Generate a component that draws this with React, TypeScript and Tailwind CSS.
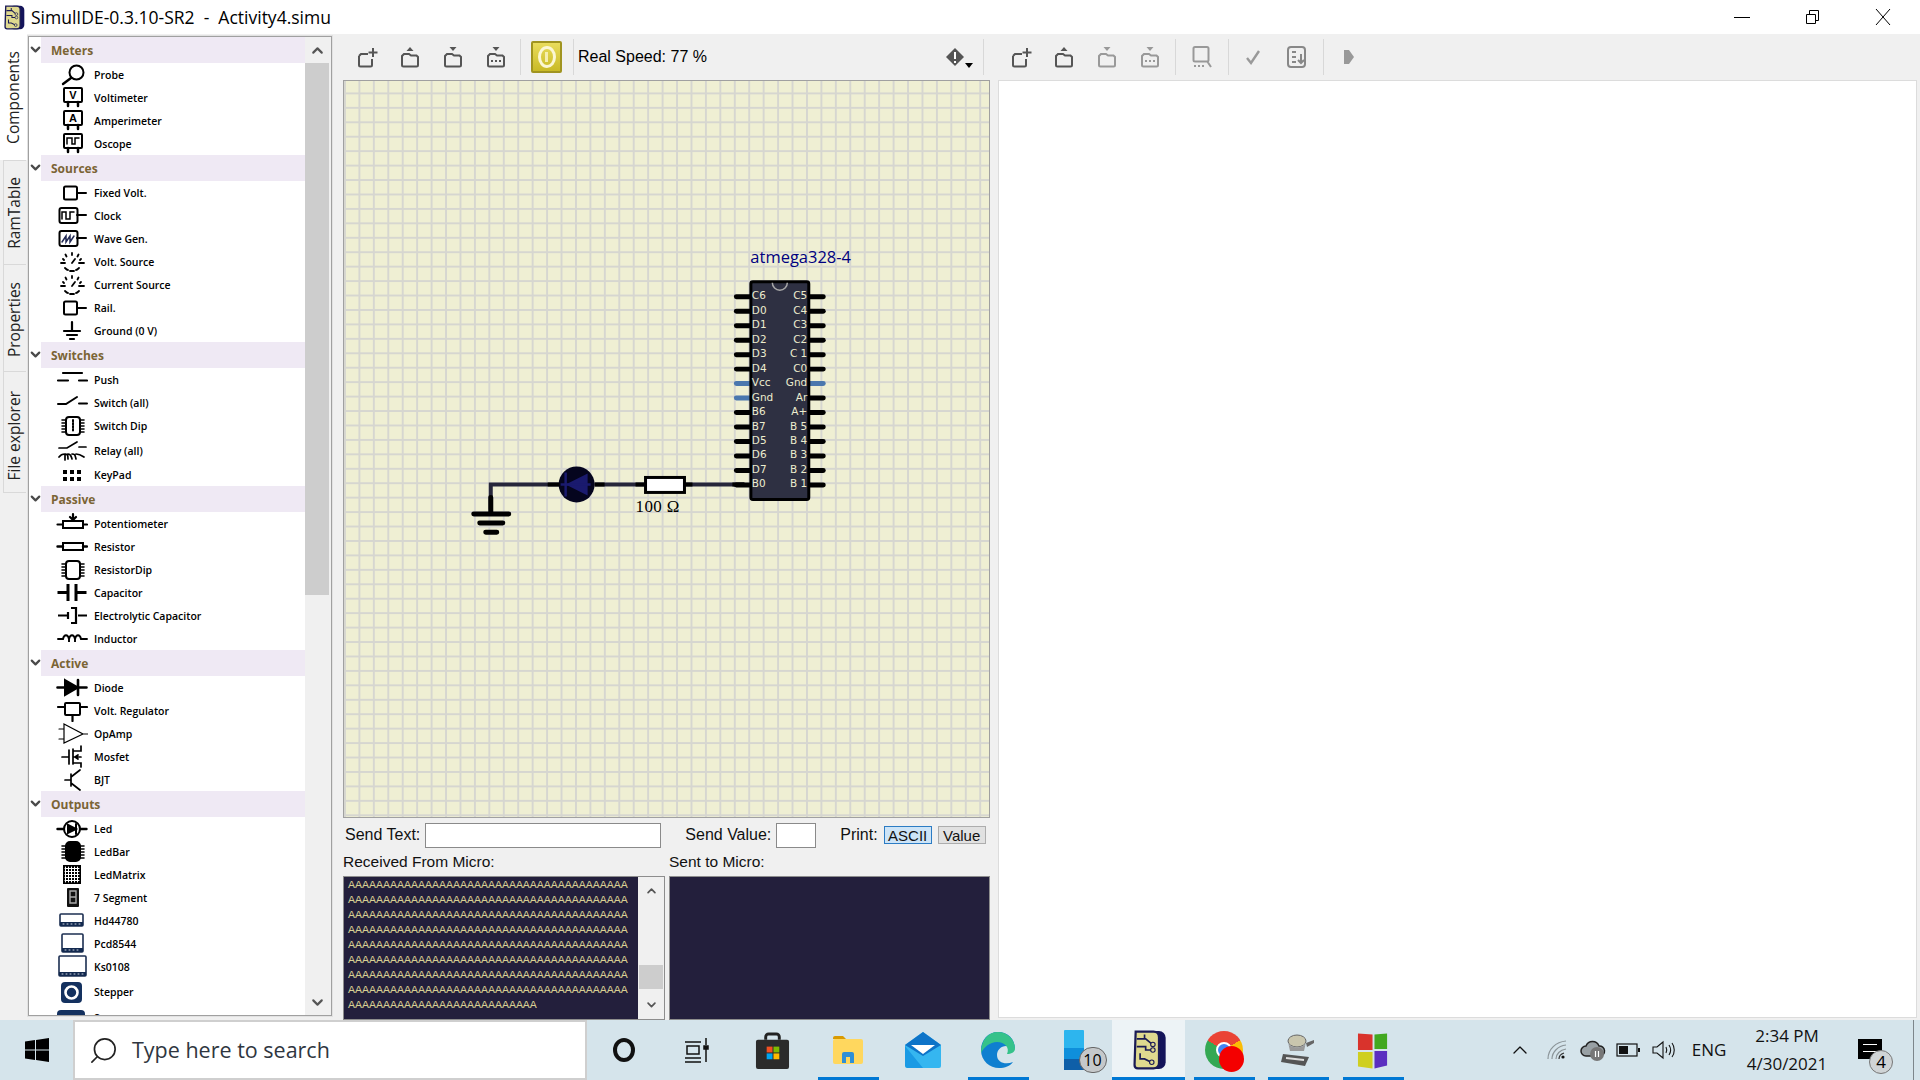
import type { ReactNode } from 'react'
import { ChevronDown, ChevronUp, Search } from 'lucide-react'

const S = ({ children }: { children: ReactNode }) => (
  <svg viewBox="0 0 32 23" className="h-[23px] w-[32px] shrink-0" fill="none" stroke="#000" strokeWidth="2" strokeLinecap="round">
    {children}
  </svg>
)

const chipPins = <path d="M6 6h4M6 9h4M6 12h4M6 15h4M6 18h4M24 6h4M24 9h4M24 12h4M24 15h4M24 18h4" strokeWidth="1.6" />

const Square = () => <path d="M9.5 5.5h10a1.5 1.5 0 0 1 1.5 1.5v10a1.5 1.5 0 0 1-1.5 1.5h-10A1.5 1.5 0 0 1 8 17V7a1.5 1.5 0 0 1 1.5-1.5zM21 12h9" />

const Meter = ({ children }: { children: ReactNode }) => (
  <>
    <rect x="8" y="2" width="18" height="14" rx="1" />
    <path d="M12 16v4M22 16v4" strokeWidth="2.5" />
    {children}
  </>
)

const SourceDots = () => (
  <path d="M16 3v2M9.500 4.500l1 2M22.500 4.500l-1 2M5 13h4M23 13h5M7 9l1 1M25 9l-1 1M9 18c1 1 2 2 3 2M20 20c1 0 2-1 3-2M14 21h4M19 9l-3 4" strokeWidth="1.800" />
)

const Screen = ({ x, y, w, h }: { x: number; y: number; w: number; h: number }) => (
  <>
    <rect x={x} y={y} width={w} height={h} rx="1" stroke="#1c2f52" strokeWidth="1.6" fill="#fff" />
    <rect x={x} y={y + h - 4} width={w} height="4" fill="#12294f" stroke="none" />
    <path d={`M${x + 3} ${y + h - 2}h${w - 6}`} stroke="#cfd6e2" strokeWidth="1" strokeDasharray="1 3" />
  </>
)

type Item = { label: string; icon: ReactNode; h?: string; nudge?: string }
type Group = { title: string; items: Item[] }

const groups: Group[] = [
  {
    title: 'Meters',
    items: [
      { label: 'Probe', icon: <><circle cx="20.5" cy="9.5" r="7" /><path d="M15 15l-8 6" strokeWidth="2.4" /></> },
      { label: 'Voltimeter', icon: <Meter><text x="17" y="13" fontSize="11" fontWeight="700" textAnchor="middle" fill="#000" stroke="none" fontFamily="Liberation Sans, sans-serif">V</text></Meter> },
      { label: 'Amperimeter', icon: <Meter><text x="17" y="13" fontSize="11" fontWeight="700" textAnchor="middle" fill="#000" stroke="none" fontFamily="Liberation Sans, sans-serif">A</text></Meter> },
      { label: 'Oscope', icon: <Meter><path d="M11 12V6h5v6h3V6h4" strokeWidth="1.5" /></Meter> },
    ],
  },
  {
    title: 'Sources',
    items: [
      { label: 'Fixed Volt.', icon: <Square /> },
      { label: 'Clock', icon: <><rect x="3.5" y="4" width="18" height="15" rx="2" /><path d="M21 11h9" /><path d="M6 15V8h4v7h4V8h4" strokeWidth="1.5" /></> },
      { label: 'Wave Gen.', icon: <><rect x="3.5" y="4" width="18" height="15" rx="2" /><path d="M21 11h9" /><path d="M6 15l4-6v6l4-6v6l4-6" strokeWidth="1.5" stroke="#222a55" /></> },
      { label: 'Volt. Source', icon: <SourceDots /> },
      { label: 'Current Source', icon: <SourceDots /> },
      { label: 'Rail.', icon: <Square /> },
      { label: 'Ground (0 V)', icon: <path d="M16 3v8M8 12h16M11 16h10M14 20h4" strokeWidth="2.2" /> },
    ],
  },
  {
    title: 'Switches',
    items: [
      { label: 'Push', icon: <path d="M7 5h19M2 12.5h10M23 12.5h8" strokeWidth="2.2" /> },
      { label: 'Switch (all)', icon: <path d="M2 13h8l11-7M23 12.5h8" strokeWidth="2" /> },
      { label: 'Switch Dip', icon: <>{chipPins}<rect x="10" y="3" width="14" height="18" rx="3" /><path d="M17 6v12" strokeDasharray="1.5 1.5" strokeWidth="2" /></> },
      { label: 'Relay (all)', h: 'h-[27px]', nudge: '-ml-px', icon: <path d="M3 9h8l10-6M23 8h7M3 18c2-3 4-3 6-3v6M9 15c2 0 3 0 3 5M12 15c3 0 3 2 4 5M16 15c3 0 3 1 4 5M20 15c3 0 5 1 8 3" strokeWidth="1.7" /> },
      { label: 'KeyPad', h: 'h-[22px]', icon: <path d="M7 8h4M14 8h4M21 8h4M7 15h4M14 15h4M21 15h4" strokeWidth="4" strokeLinecap="butt" /> },
    ],
  },
  {
    title: 'Passive',
    items: [
      { label: 'Potentiometer', icon: <><rect x="7" y="9" width="20" height="7" /><path d="M1.5 12.5H7M27 12.5h4M17 2v6M14 5l3 3 3-3" strokeWidth="2.2" /></> },
      { label: 'Resistor', icon: <><rect x="7" y="8" width="20" height="7" /><path d="M1.5 11.5H7M27 11.5h4" strokeWidth="2.4" /></> },
      { label: 'ResistorDip', icon: <>{chipPins}<rect x="10" y="3" width="14" height="18" rx="3" /></> },
      { label: 'Capacitor', icon: <path d="M1.5 11.5h10M20.5 11.5h10M12 3v17M20 3v17" strokeWidth="3" strokeLinecap="butt" /> },
      { label: 'Electrolytic Capacitor', icon: <path d="M2 11.5h10M22 11.5h9M12 8v7M15 4h5v15h-5M20 4v15" strokeWidth="2.2" strokeLinecap="butt" /> },
      { label: 'Inductor', icon: <path d="M2 12h5c1-5 5-5 6 0v3-3c1-5 5-5 6 0v3-3c1-5 5-5 6 0h6" strokeWidth="1.9" /> },
    ],
  },
  {
    title: 'Active',
    items: [
      { label: 'Diode', icon: <><path d="M1.5 11.5h29M22 4v15" strokeWidth="2.6" /><path d="M9 4l13 7.5L9 19z" fill="#000" /></> },
      { label: 'Volt. Regulator', icon: <><rect x="9" y="4" width="15" height="12" rx="1" /><path d="M2 8h7M24 8h7M16.5 16v6" strokeWidth="2.2" /></> },
      { label: 'OpAmp', icon: <path d="M8 2l19 10L8 21zM3 7h5M3 17h5M27 12h5" strokeWidth="1.2" /> },
      { label: 'Mosfet', icon: <path d="M6 12h7M13 5v14M17 4v15M17 6h8V1M17 12h8M17 18h8v4M22 10l-3 2 3 2" strokeWidth="1.7" /> },
      { label: 'BJT', icon: <path d="M9 12h6M15 6v12M15 9l9-7M15 15l9 7" strokeWidth="1.7" /> },
    ],
  },
  {
    title: 'Outputs',
    items: [
      { label: 'Led', icon: <><circle cx="16" cy="12" r="8" /><path d="M1.5 12H8M24 12h6.5" strokeWidth="2.4" /><path d="M12 8l8 4-8 4z" fill="#000" /><path d="M20 7v10" /></> },
      { label: 'LedBar', icon: <>{chipPins}<rect x="10" y="2" width="14" height="19" rx="4" fill="#000" /></> },
      { label: 'LedMatrix', icon: <><rect x="7" y="2" width="18" height="19" fill="#000" stroke="none" /><path d="M9.5 4v15M12.5 4v15M15.5 4v15M18.5 4v15M21.5 4v15M9 5.5h14M9 8.5h14M9 11.5h14M9 14.5h14M9 17.5h14" stroke="#fff" strokeWidth="1" /></> },
      { label: '7 Segment', icon: <><rect x="11" y="2" width="12" height="19" rx="1" fill="#111" stroke="none" /><path d="M14 5h6v6h-6zM14 11h6v6h-6z" stroke="#aaa" strokeWidth="1.4" /></> },
      { label: 'Hd44780', icon: <Screen x={4} y={5} w={23} h={12} /> },
      { label: 'Pcd8544', icon: <Screen x={6} y={2} w={21} h={18} /> },
      { label: 'Ks0108', icon: <Screen x={3} y={1} w={27} h={20} /> },
      { label: 'Stepper', h: 'h-[28px]', nudge: '-ml-0.5', icon: <><rect x="5" y="1" width="21" height="21" rx="4" fill="#14315f" stroke="none" /><circle cx="15.5" cy="11.5" r="6" fill="#14315f" stroke="#fff" strokeWidth="2.6" /></> },
      { label: 'Servo', icon: <rect x="1" y="4" width="28" height="16" rx="4" fill="#14315f" stroke="none" /> },
    ],
  },
]

const ToolIcon = ({ kind, tone = '#555' }: { kind: 'new' | 'open' | 'save' | 'saveas'; tone?: string }) => (
  <svg viewBox="0 0 22 22" className="h-[22px] w-[22px]" fill="none" stroke={tone} strokeWidth="2">
    <path d={kind === 'new' ? 'M3 10v9a1.5 1.5 0 0 0 1.5 1.5h10A1.5 1.5 0 0 0 16 19v-6M3 10l2-2h7' : 'M3 10v9a1.5 1.5 0 0 0 1.5 1.5h13A1.5 1.5 0 0 0 19 19v-8l-1.5-1.5H12L10 8H5z'} />
    {kind === 'new' && <path d="M17 2v9M12.5 6.5h9" />}
    {kind === 'open' && <path d="M7.5 5L11 1l3.5 4z" fill={tone} stroke="none" />}
    {(kind === 'save' || kind === 'saveas') && <path d="M7.5 1L11 5l3.5-4z" fill={tone} stroke="none" />}
    {kind === 'saveas' && <path d="M6 15h2M10 15h2M14 15h2" strokeWidth="2" />}
  </svg>
)

const Sep = ({ cls }: { cls: string }) => <div className={`h-9 w-px bg-[#d8d8d8] ${cls}`} />

function Toolbar() {
  return (
    <div className="flex h-[46px] shrink-0 items-center pl-[2px]">
      {(['new', 'open', 'save', 'saveas'] as const).map((k) => (
        <div key={k} className="flex w-[43px] justify-center">
          <ToolIcon kind={k} />
        </div>
      ))}
      <Sep cls="ml-[3px]" />
      <div className="ml-[10px] flex h-8 w-[31px] items-center justify-center rounded-[2px] border-2 border-[#a09420] bg-[linear-gradient(#e9dc5c,#c9ba26)]">
        <div className="flex h-[22px] w-[18px] items-center justify-center rounded-[50%] border-[3px] border-[#fbf7d4]">
          <div className="h-[10px] w-[3px] bg-[#f5eeb0]" />
        </div>
      </div>
      <Sep cls="ml-[11px]" />
      <span className="ml-1 text-[16px] text-black [font-family:'Liberation_Sans',sans-serif]">Real Speed: 77 %</span>
      <div className="relative ml-auto mr-[18px] flex items-center">
        <svg viewBox="0 0 20 20" className="h-5 w-5">
          <path d="M10 1l9 9-9 9-9-9z" fill="#555" />
          <path d="M10 5v7M10 14v2" stroke="#fff" strokeWidth="2" />
        </svg>
        <div className="absolute -right-[8px] top-[16px] h-0 w-0 border-x-4 border-t-[5px] border-x-transparent border-t-black" />
      </div>
      <Sep cls="mr-[6px]" />
    </div>
  )
}

function RightToolbar() {
  return (
    <div className="flex h-[46px] shrink-0 items-center pl-px">
      <div className="flex w-[43px] justify-center"><ToolIcon kind="new" /></div>
      <div className="flex w-[43px] justify-center"><ToolIcon kind="open" /></div>
      <div className="flex w-[43px] justify-center"><ToolIcon kind="save" tone="#999" /></div>
      <div className="flex w-[43px] justify-center"><ToolIcon kind="saveas" tone="#999" /></div>
      <Sep cls="ml-[4px]" />
      <div className="flex w-[52px] justify-center">
        <svg viewBox="0 0 22 24" className="h-[24px] w-[22px]" fill="none" stroke="#999" strokeWidth="2">
          <path d="M4 2h12a1.5 1.5 0 0 1 1.5 1.5V15a1.5 1.5 0 0 1-1.5 1.5H4A1.5 1.5 0 0 1 2.500 15V3.500A1.500 1.500 0 0 1 4 2zM16 16l4 6M3 21h2M7 21h2M11 21h2" />
        </svg>
      </div>
      <Sep cls="" />
      <div className="flex w-[48px] justify-center">
        <svg viewBox="0 0 16 16" className="h-4 w-4" fill="none" stroke="#999" strokeWidth="2.400"><path d="M2 9l4 5 8-12" /></svg>
      </div>
      <div className="flex w-[40px] justify-center">
        <svg viewBox="0 0 22 24" className="h-6 w-[22px]" fill="none" stroke="#888" strokeWidth="2"><rect x="2" y="2" width="17" height="20" rx="3" /><path d="M6 7h4M6 12h4M6 17h4M15 9v9M12 15l3 3 3-3" /></svg>
      </div>
      <Sep cls="ml-[6px]" />
      <div className="flex w-[50px] justify-center">
        <svg viewBox="0 0 12 16" className="h-4 w-3"><path d="M1 1h5l5 7-5 7H1z" fill="#999" /></svg>
      </div>
    </div>
  )
}

const pinY = [297, 311.5, 326, 340.5, 355, 369.5, 384, 398.5, 413, 427.5, 442, 456.5, 471, 485.5]
const leftPins = ['C6', 'D0', 'D1', 'D2', 'D3', 'D4', 'Vcc', 'Gnd', 'B6', 'B7', 'D5', 'D6', 'D7', 'B0']
const rightPins = ['C5', 'C4', 'C3', 'C2', 'C 1', 'C0', 'Gnd', 'Ar', 'A+', 'B 5', 'B 4', 'B 3', 'B 2', 'B 1']

function Circuit() {
  return (
    <svg viewBox="344 81 646 737" className="absolute inset-0 h-full w-full" fill="none">
      <path d="M491 510V485H560M595 485H645M685 485H745" stroke="#26263a" strokeWidth="4" />
      <path d="M491 498v14M474 514.500h35M480 523.500h23M486 533h11" stroke="#000" strokeWidth="5" strokeLinecap="round" />
      <circle cx="577" cy="485" r="18" fill="#05051e" />
      <path d="M588 474v22L566 485z" fill="#1a1a6e" />
      <path d="M561 485h30M566 473v24" stroke="#1a1a6e" strokeWidth="2.500" />
      <path d="M548 485h12M595 485h10M636 485h9M685 485h8M733 485h12" stroke="#000" strokeWidth="4" />
      <rect x="646" y="478" width="39" height="15" fill="#fff" stroke="#000" strokeWidth="3" />
      <text x="636" y="513" fontSize="17" fill="#000" fontFamily="'Liberation Serif', serif" letterSpacing="0.4" xmlSpace="preserve">100 Ω</text>
      {pinY.map((y, i) => (
        <g key={y} strokeWidth="5" strokeLinecap="round">
          <path d={`M737 ${y}h14`} stroke={i === 6 || i === 7 ? '#4a77ae' : '#000'} />
          <path d={`M810 ${y}h14`} stroke={i === 6 ? '#4a77ae' : '#000'} />
        </g>
      ))}
      <rect x="751.500" y="282" width="58" height="218" rx="2" fill="#2e3042" stroke="#000" strokeWidth="3" />
      <path d="M773 283a7.500 7.500 0 0 0 15 0" stroke="#a8a8a8" strokeWidth="1.500" />
      {leftPins.map((t, i) => (
        <text key={`l${i}`} x="752.500" y={pinY[i] + 2.5} fontSize="10.500" fill="#ededcf" fontFamily="'DejaVu Sans', sans-serif">{t}</text>
      ))}
      {rightPins.map((t, i) => (
        <text key={`r${i}`} x="808" y={pinY[i] + 2.5} fontSize="10.500" textAnchor="end" fill="#ededcf" fontFamily="'DejaVu Sans', sans-serif">{t}</text>
      ))}
      <text x="751" y="263" fontSize="16.500" fill="#000080" fontFamily="'Open Sans', sans-serif">atmega328-4</text>
    </svg>
  )
}

const Tab = ({ label, cls }: { label: string; cls: string }) => (
  <div className={`flex items-center justify-center ${cls}`}>
    <span className="rotate-180 text-[15.500px] text-[#222] [font-family:'Open_Sans',sans-serif] [writing-mode:vertical-rl]">{label}</span>
  </div>
)

function Tree() {
  return (
    <div className="mb-[4px] mt-[2px] flex w-[304px] shrink-0 border border-[#a0a0a0] outline outline-1 outline-[#e2e2e2]">
      <div className="min-w-0 flex-1 overflow-hidden bg-white [font-family:'Open_Sans',sans-serif]">
        {groups.map((g) => (
          <div key={g.title}>
            <div className="flex h-[26px] items-center">
              <div className="flex w-[12px] justify-center">
                <ChevronDown size={15} strokeWidth={3.5} className="-mt-0.5 shrink-0 text-[#4a4a4a]" />
              </div>
              <div className="flex h-full flex-1 items-center bg-[#efe9f4] pl-[10px] pt-[2px] text-[12px] font-bold text-[#7b6435]">{g.title}</div>
            </div>
            {g.items.map((it) => (
              <div key={it.label} className={`flex items-center pl-[27px] ${it.h ?? 'h-[23px]'}`}>
                <S>{it.icon}</S>
                <span className={`ml-[6px] pt-[2px] text-[10.500px] font-semibold text-black ${it.nudge ?? ''}`}>{it.label}</span>
              </div>
            ))}
          </div>
        ))}
      </div>
      <div className="flex w-[26px] shrink-0 flex-col bg-[#f0f0f0] pr-[2px]">
        <div className="flex h-[26px] shrink-0 items-center justify-center"><ChevronUp size={17} strokeWidth={3} className="text-[#555]" /></div>
        <div className="h-[532px] shrink-0 bg-[#cdcdcd]" />
        <div className="mt-auto flex h-[26px] shrink-0 items-center justify-center"><ChevronDown size={17} strokeWidth={3} className="text-[#555]" /></div>
      </div>
    </div>
  )
}

const rxLines = Array.from({ length: 9 }, (_, i) => (i === 8 ? 'A'.repeat(27) : 'A'.repeat(40)))

function SerialPanel() {
  return (
    <div className="flex h-[202px] shrink-0 flex-col text-[16px] text-[#111] [font-family:'Liberation_Sans',sans-serif]">
      <div className="flex h-[29px] shrink-0 items-center pt-[5px]">
        <span className="ml-[2px]">Send Text:</span>
        <div className="ml-[5px] h-[25px] w-[236px] border border-[#8a8a8a] bg-white" />
        <span className="ml-[24px]">Send Value:</span>
        <div className="ml-[5px] h-[25px] w-[40px] border border-[#8a8a8a] bg-white" />
        <span className="ml-[24px]">Print:</span>
        <div className="ml-[6px] flex h-[18px] w-[48px] shrink-0 items-center justify-center border border-[#2c7cc4] bg-[#cde4f7] text-[15px] leading-none">ASCII</div>
        <div className="ml-[6px] flex h-[18px] w-[48px] shrink-0 items-center justify-center border border-[#adadad] bg-[#e1e1e1] text-[15px] leading-none">Value</div>
      </div>
      <div className="flex h-[29px] shrink-0 items-end pb-[3px] text-[15.500px]">
        <span className="w-[326px]">Received From Micro:</span>
        <span>Sent to Micro:</span>
      </div>
      <div className="flex min-h-0 flex-1">
        <div className="flex w-[322px] border border-[#8d8d8d]">
          <div className="flex-1 overflow-hidden bg-[#231f3c] pl-[4px] pt-[1px] text-[11.670px] leading-[15px] text-[#d8cf94] [font-family:'Liberation_Mono',monospace]">
            {rxLines.map((l, i) => (
              <div key={i}>{l}</div>
            ))}
          </div>
          <div className="flex w-[26px] shrink-0 flex-col items-center bg-[#f0f0f0] py-[7px]">
            <ChevronUp size={15} strokeWidth={3} className="text-[#555]" />
            <div className="mt-[67px] h-[27px] w-[24px] bg-[#cdcdcd]" />
            <ChevronDown size={15} strokeWidth={3} className="mt-[9px] text-[#555]" />
          </div>
        </div>
        <div className="ml-[4px] flex-1 border border-[#8d8d8d] bg-[#231f3c]" />
      </div>
    </div>
  )
}

const Slot = ({ w, on, active, children }: { w: string; on?: boolean; active?: boolean; children: ReactNode }) => (
  <div className={`relative flex h-full shrink-0 items-center justify-center ${w} ${active ? 'bg-[#edf3f6]' : ''}`}>
    {children}
    {on && <div className={`absolute bottom-0 h-[3px] bg-[#0078d4] ${active ? 'inset-x-0' : 'w-[61px]'}`} />}
  </div>
)

const SimulLogo = ({ size }: { size: string }) => (
  <svg viewBox="0 0 32 36" className={size}>
    <rect x="10" y="1" width="21" height="34" rx="6" fill="#14145a" />
    <path d="M4 1.500h16c3 0 5 2 5 5v23c0 3-2 5-5 5H6c-2 0-3-1-3-3z" fill="#dfd98f" stroke="#1a1a55" strokeWidth="2" />
    <path d="M5 8h8l6 5M5 15h8v3h6M8 21v5h4l6 3M12 8V4" stroke="#1a1a55" strokeWidth="1.500" fill="none" />
    <circle cx="19.500" cy="13" r="2" fill="#dfd98f" stroke="#1a1a55" />
    <circle cx="19.500" cy="18" r="2" fill="#dfd98f" stroke="#1a1a55" />
    <circle cx="18.500" cy="29" r="2" fill="#dfd98f" stroke="#1a1a55" />
  </svg>
)

function Taskbar() {
  return (
    <div className="flex h-[60px] shrink-0 bg-[#d5e4eb] [font-family:'Open_Sans',sans-serif]">
      <div className="flex w-[73px] shrink-0 items-center justify-center">
        <svg viewBox="0 0 24 24" className="h-6 w-6" fill="#000"><path d="M0 3.500l10-1.400V11.500H0zM11 2l13-2v11.500H11zM0 12.500h10v9.600L0 20.600zM11 12.500h13V24l-13-2z" /></svg>
      </div>
      <div className="flex w-[514px] shrink-0 items-center border-2 border-[#cfcfcf] bg-white pl-[13px]">
        <Search size={31} strokeWidth={1.3} className="-scale-x-100 text-[#222]" />
        <span className="ml-[13px] text-[21.500px] text-[#2f3640]">Type here to search</span>
      </div>
      <Slot w="w-[74px]">
        <div className="h-[24px] w-[22px] rounded-[50%] border-[4px] border-[#111]" />
      </Slot>
      <Slot w="w-[72px]">
        <svg viewBox="0 0 26 26" className="h-[26px] w-[26px]" fill="none" stroke="#111" strokeWidth="1.500"><path d="M1 5h16M1 25h16M3 9h12v8H3zM1 21h16M22 1v7M22 12v13" /><path d="M20 9h4v3h-4z" fill="#111" /></svg>
      </Slot>
      <Slot w="w-[78px]">
        <svg viewBox="0 0 36 38" className="h-[37px] w-[35px]"><path d="M11 8V5a3 3 0 0 1 3-3h8a3 3 0 0 1 3 3v3" fill="none" stroke="#222" strokeWidth="3" /><rect x="1" y="8" width="34" height="30" rx="2" fill="#2b2b2b" /><rect x="12" y="15" width="6" height="6" fill="#f25022" /><rect x="19" y="15" width="6" height="6" fill="#7fba00" /><rect x="12" y="22" width="6" height="6" fill="#00a4ef" /><rect x="19" y="22" width="6" height="6" fill="#ffb900" /></svg>
      </Slot>
      <Slot w="w-[74px]" on>
        <svg viewBox="0 0 32 30" className="h-[30px] w-[32px]"><path d="M1 3a2 2 0 0 1 2-2h8l3 3H1z" fill="#d99a00" /><rect x="1" y="4" width="30" height="25" rx="2" fill="#ffd75e" /><path d="M10 28V19a2 2 0 0 1 2-2h8a2 2 0 0 1 2 2v9h-4v-6h-4v6z" fill="#2f8fd6" /></svg>
      </Slot>
      <Slot w="w-[76px]">
        <svg viewBox="0 0 36 36" className="h-9 w-9"><path d="M18 0l18 13v21a2 2 0 0 1-2 2H2a2 2 0 0 1-2-2V13z" fill="#35b6f0" /><path d="M0 13L18 0l18 13-18 11z" fill="#0e74c8" /><path d="M6 13h24l-12 9z" fill="#fff" /><path d="M0 34V14l18 22H2z" fill="#1a9ae4" /></svg>
      </Slot>
      <Slot w="w-[74px]" on>
        <svg viewBox="0 0 36 38" className="h-[38px] w-[36px]"><path d="M18 1C8 1 1 9 1 19c0 11 9 18 18 18 6 0 11-2 14-6-7 3-16 1-16-7 0-5 4-9 9-9 6 0 9 3 9 3C35 8 28 1 18 1z" fill="#0f7fd0" /><path d="M18 1c8 0 17 6 17 17 0 3-4 5-8 5 3-6-2-12-10-12-7 0-13 5-16 11C1 9 8 1 18 1z" fill="#35c28a" /></svg>
      </Slot>
      <Slot w="w-[77px]">
        <div className="relative flex items-center">
          <svg viewBox="0 0 20 40" className="h-[40px] w-[20px]"><rect width="20" height="40" rx="1" fill="#2db5ee" /><rect y="18" width="20" height="11" fill="#0f8fdb" /><rect y="29" width="20" height="11" fill="#0f5fa8" /></svg>
          <div className="absolute -bottom-[3px] left-[15px] flex h-[26px] w-[28px] items-center justify-center rounded-full border border-[#666] bg-[#c5c8ca] text-[16px] leading-none text-black">10</div>
        </div>
      </Slot>
      <Slot w="w-[73px]" on active>
        <SimulLogo size="h-[40px] w-[36px]" />
      </Slot>
      <Slot w="w-[78px]" on>
        <div className="relative h-[38px] w-[38px]">
          <div className="h-full w-full rounded-full bg-[conic-gradient(from_300deg,#ea4335_0_33%,#fbbc05_33%_50%,#34a853_50%_100%)]" />
          <div className="absolute left-[11px] top-[11px] h-4 w-4 rounded-full border-2 border-white bg-[#4285f4]" />
          <div className="absolute left-[14px] top-[15px] h-[26px] w-[25px] rounded-[50%] bg-[#f40000]" />
        </div>
      </Slot>
      <Slot w="w-[70px]" on>
        <svg viewBox="0 0 36 36" className="h-9 w-9"><ellipse cx="17" cy="9" rx="9" ry="6" fill="#c9c6ae" stroke="#666" /><path d="M8 10c0 7 18 7 18 0l-2 9H10z" fill="#999" /><path d="M26 11l8-3v3l-7 4z" fill="#666" /><path d="M3 22l26 3-4 9L1 30z" fill="#555" /><path d="M6 26l18 2" stroke="#ddd" strokeWidth="2" /></svg>
      </Slot>
      <Slot w="w-[80px]" on>
        <svg viewBox="0 0 34 38" className="h-[38px] w-[33px]"><path d="M1 2l15 1v16H1z" fill="#d9332c" /><path d="M18 3l13-1v16H18z" fill="#42a820" /><path d="M1 21h15v17L1 36z" fill="#cfcf1f" /><path d="M18 20h13v15l-13 3z" fill="#5b2fc0" /></svg>
      </Slot>
      <div className="flex-1" />
      <div className="flex h-full w-[36px] items-center justify-center">
        <ChevronUp size={24} strokeWidth={1.3} className="text-[#111]" />
      </div>
      <div className="flex h-full w-[37px] items-center justify-center">
        <svg viewBox="0 0 20 20" className="h-[20px] w-[20px]" fill="none" stroke="#8b9498" strokeWidth="1.200"><path d="M1 19C1 9 9 2 19 1M5 19c0-7 6-13 14-14M9 19c0-5 4-9 10-10" /><path d="M12 19c0-3 2-5 5-6" stroke="#333" /><circle cx="16" cy="17" r="1.600" fill="#111" stroke="none" /></svg>
      </div>
      <div className="flex h-full w-[35px] items-center justify-center">
        <svg viewBox="0 0 26 22" className="h-[22px] w-[26px]"><path d="M6 17a5 5 0 0 1 0-10 7 7 0 0 1 13 0 5 5 0 0 1 1 10z" fill="#98a0a4" stroke="#222" strokeWidth="1.500" /><circle cx="17" cy="15" r="7" fill="#777" /><path d="M15.500 12v6M18.500 12v6" stroke="#fff" strokeWidth="1.200" /></svg>
      </div>
      <div className="flex h-full w-[36px] items-center justify-center">
        <svg viewBox="0 0 24 14" className="h-[14px] w-[24px]" fill="none"><rect x="1" y="1" width="20" height="12" stroke="#111" strokeWidth="1.200" /><rect x="3" y="3" width="9" height="8" fill="#111" /><rect x="22" y="5" width="2" height="4" fill="#111" /></svg>
      </div>
      <div className="flex h-full w-[36px] items-center justify-center">
        <svg viewBox="0 0 24 20" className="h-[20px] w-[24px]" fill="none" stroke="#111" strokeWidth="1.100"><path d="M1 7h4l6-5v16l-6-5H1zM14 7c1 2 1 4 0 6M17 5c2 3 2 7 0 10M20 3c3 4 3 10 0 14" /></svg>
      </div>
      <div className="flex h-full w-[54px] items-center justify-center text-[17px] text-[#111]">ENG</div>
      <div className="flex h-full w-[102px] flex-col items-center justify-center text-[17px] leading-[28px] text-[#111]">
        <span>2:34 PM</span>
        <span>4/30/2021</span>
      </div>
      <div className="flex h-full w-[64px] items-center justify-center">
        <div className="relative -mt-[3px] h-[20px] w-[24px] bg-black">
          <div className="ml-[5px] mt-[5px] h-[8px] w-[14px] border-y border-white" />
          <div className="absolute -bottom-[15px] left-[11px] flex h-[24px] w-[24px] items-center justify-center rounded-full border border-[#777] bg-[#d0d4d6] text-[17px] leading-none text-black">4</div>
        </div>
      </div>
      <div className="ml-[11px] mr-[6px] h-full w-px bg-[#7d868b]" />
    </div>
  )
}

export default function App() {
  return (
    <div className="flex h-screen w-screen flex-col overflow-hidden bg-[#f0f0f0]">
      {/* title bar */}
      <div className="flex h-[34px] shrink-0 items-center bg-white">
        <div className="ml-[3px] w-[22px]">
          <SimulLogo size="h-[25px] w-[22px]" />
        </div>
        <span className="ml-[6px] whitespace-pre text-[17.500px] text-black [font-family:'Open_Sans',sans-serif]">SimulIDE-0.3.10-SR2  -  Activity4.simu</span>
        <div className="ml-auto mr-[2px] flex h-full items-center">
          <div className="flex w-[68px] justify-center"><div className="h-px w-4 bg-black" /></div>
          <div className="flex w-[71px] justify-center">
            <svg viewBox="0 0 16 16" className="h-4 w-4" fill="none" stroke="#000"><path d="M2.500 5.500h9v9h-9zM5.500 5V1.500h9v10H12" /></svg>
          </div>
          <div className="flex w-[71px] justify-center">
            <svg viewBox="0 0 16 16" className="h-4 w-4" fill="none" stroke="#000"><path d="M1 0l14 16M15 0L1 16" /></svg>
          </div>
        </div>
      </div>

      {/* main area */}
      <div className="flex min-h-0 flex-1">
        <div className="flex w-[28px] shrink-0 flex-col">
          <Tab label="Components" cls="h-[126px] w-[27px] bg-white" />
          <Tab label="RamTable" cls="ml-[3px] h-[105px] w-[23px] border-y border-l border-[#d9d9d9]" />
          <Tab label="Properties" cls="ml-[3px] h-[107px] w-[23px] border-b border-l border-[#d9d9d9] pt-[3px]" />
          <Tab label="File explorer" cls="ml-[3px] h-[121px] w-[23px] border-b border-l border-[#d9d9d9] pt-[7px]" />
        </div>
        <Tree />
        <div className="ml-[11px] flex w-[647px] shrink-0 flex-col">
          <Toolbar />
          <div className="relative min-h-0 flex-1 overflow-hidden border border-[#a0a0a0] bg-[#efefd3] bg-[linear-gradient(to_right,#d6d6d0_2px,transparent_2px),linear-gradient(to_bottom,#d6d6d0_2px,transparent_2px)] bg-[size:14.450px_14.450px] bg-[position:0_-3px]">
            <Circuit />
          </div>
          <SerialPanel />
        </div>
        <div className="ml-[8px] flex min-w-0 flex-1 flex-col pr-[3px]">
          <RightToolbar />
          <div className="mb-[2px] flex-1 border border-[#dcdcdc] bg-white" />
        </div>
      </div>

      <Taskbar />
    </div>
  )
}
